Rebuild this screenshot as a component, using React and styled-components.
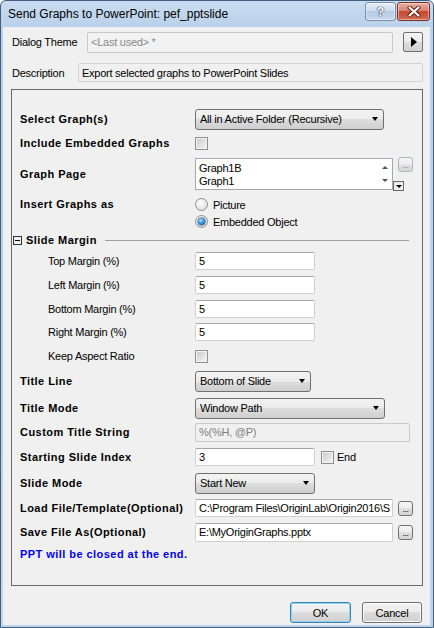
import styled, { createGlobalStyle } from 'styled-components';

const GlobalStyle = createGlobalStyle`
  html, body {
    margin: 0;
    padding: 0;
    background: #ffffff;
  }
  body {
    font-family: "Liberation Sans", Arial, sans-serif;
    font-size: 11px;
    color: #000;
  }
  * {
    box-sizing: border-box;
  }
`

const Window = styled.div`
  width: 434px;
  height: 628px;
  display: flex;
  flex-direction: column;
  border: 1px solid #3f5e80;
  border-radius: 6px 6px 0 0;
  background: linear-gradient(#cadcf1, #b9d1ea 26px, #bdd4ec);
  padding: 0 3px 2px 2px;
`

const TitleBar = styled.div`
  height: 26px;
  display: flex;
  align-items: flex-start;
  flex-shrink: 0;
`

const Caption = styled.div`
  margin-left: 5px;
  line-height: 26px;
  font-size: 12px;
  color: #000;
`

const CaptionButtons = styled.div`
  margin-left: auto;
  margin-top: 1px;
  display: flex;
  gap: 1px;
`

const CaptionButton = styled.div`
  width: ${p => p.$w}px;
  height: 19px;
  border-radius: 3px;
  display: flex;
  align-items: center;
  justify-content: center;
  border: 1px solid ${p => (p.$danger ? '#7a2c1f' : '#7a8ea8')};
  background: ${p =>
    p.$danger
      ? 'linear-gradient(#eab0a2, #d8826f 45%, #c44a34 50%, #cf6a50)'
      : 'linear-gradient(#e6eef8, #cddcee 45%, #b4c9e2 50%, #c7d8ee)'};
  box-shadow: inset 0 0 0 1px rgba(255, 255, 255, 0.45);
  color: #fff;
  font-weight: bold;
  font-size: 13px;
  text-shadow: 0 0 1px #2b3c55, 0 0 1px #2b3c55, 0 0 1px #2b3c55;
`

const Client = styled.div`
  flex: 1;
  background: #f0f0f0;
  display: flex;
  flex-direction: column;
  padding: 4px 0 0 8px;
`

const HeaderRow = styled.div`
  display: flex;
  align-items: center;
  height: ${p => p.$h}px;
  margin-top: ${p => p.$mt || 0}px;
  padding-left: 1px;
`

const HeaderLabel = styled.span`
  width: ${p => p.$w}px;
  flex-shrink: 0;
  letter-spacing: -0.25px;
`

const ReadOnlyBox = styled.div`
  width: ${p => p.$w}px;
  height: ${p => p.$h}px;
  display: flex;
  align-items: center;
  padding-left: 3px;
  border: 1px solid ${p => p.$border || '#cfcfcf'};
  border-radius: 2px;
  background: ${p => p.$bg || '#f0f0f0'};
  color: ${p => p.$color || '#000'};
  letter-spacing: -0.25px;
  white-space: nowrap;
  overflow: hidden;
`

const ArrowButton = styled.div`
  width: 20px;
  height: 20px;
  margin-left: 10px;
  border: 1px solid #707070;
  border-radius: 2px;
  background: linear-gradient(#f4f4f4, #ebebeb 50%, #dddddd 50%, #d0d0d0);
  display: flex;
  align-items: center;
  justify-content: center;

  &::after {
    content: '';
    border-top: 5.5px solid transparent;
    border-bottom: 5.5px solid transparent;
    border-left: 6px solid #000;
    margin-left: 1px;
  }
`

const GroupBox = styled.div`
  margin-top: 7px;
  width: 412px;
  height: 497px;
  border: 1px solid #696969;
  padding: 17px 8px 0 8px;
  display: flex;
  flex-direction: column;
`

const Row = styled.div`
  display: flex;
  align-items: ${p => p.$align || 'center'};
  height: ${p => p.$h}px;
  flex-shrink: 0;
`

const Label = styled.span`
  width: ${p => 175 - (p.$indent || 0)}px;
  margin-left: ${p => p.$indent || 0}px;
  flex-shrink: 0;
  font-weight: ${p => (p.$bold ? 'bold' : 'normal')};
  letter-spacing: ${p => (p.$bold ? '0.45px' : '-0.25px')};
  line-height: ${p => p.$lh || 'normal'};
  margin-top: ${p => p.$mt || 0}px;
  white-space: nowrap;
`

const Combo = styled.div`
  width: ${p => p.$w}px;
  height: 21px;
  border: 1px solid #707070;
  border-radius: 3px;
  background: linear-gradient(#f3f3f3, #ebebeb 50%, #dddddd 50%, #cfcfcf);
  display: flex;
  align-items: center;
  padding-left: 4px;
  letter-spacing: -0.25px;
  white-space: nowrap;

  &::after {
    content: '';
    margin-left: auto;
    margin-right: 5px;
    border-left: 3.5px solid transparent;
    border-right: 3.5px solid transparent;
    border-top: 4px solid #000;
  }
`

const Field = styled.div`
  width: ${p => p.$w}px;
  height: ${p => p.$h || 18}px;
  border: 1px solid #d0d0d0;
  border-top-color: #a6a6a6;
  border-radius: 2px;
  background: #fff;
  display: flex;
  align-items: center;
  padding-left: 3px;
  letter-spacing: -0.25px;
  white-space: nowrap;
  overflow: hidden;
`

const Checkbox = styled.span`
  width: 13px;
  height: 13px;
  flex-shrink: 0;
  border: 1px solid #8e8f8f;
  background: linear-gradient(135deg, #c9c9c9, #f6f6f6);
  box-shadow: inset 0 0 0 1px #f4f4f4;
`

const CheckLabel = styled.label`
  display: flex;
  align-items: center;
  gap: 3px;
  margin-left: 6px;
  letter-spacing: -0.25px;
`

const RadioGroup = styled.div`
  display: flex;
  flex-direction: column;
  padding-top: 3px;
`

const RadioOption = styled.label`
  display: flex;
  align-items: center;
  height: 17px;
  gap: 5px;
  letter-spacing: -0.25px;
`

const Radio = styled.span`
  width: 13px;
  height: 13px;
  border-radius: 50%;
  border: 1px solid #8e8f8f;
  background: radial-gradient(circle at 40% 35%, #ffffff, #e6e6e6 60%, #cfcfcf);
  display: flex;
  align-items: center;
  justify-content: center;

  &::after {
    content: '';
    display: ${p => (p.$checked ? 'block' : 'none')};
    width: 7px;
    height: 7px;
    border-radius: 50%;
    background: radial-gradient(circle at 40% 35%, #a6e0ff, #2a86d0 55%, #0c3c6e);
    box-shadow: 0 0 0 0.5px #1a3a5c;
  }
`

const ListBox = styled.div`
  width: 198px;
  height: 32px;
  border: 1px solid #a5a9ae;
  background: #fff;
  display: flex;
  padding: 3px 0 0 3px;
  line-height: 13px;
`

const ListItems = styled.div`
  flex: 1;
  letter-spacing: -0.25px;
`

const SpinArrows = styled.div`
  width: 14px;
  display: flex;
  flex-direction: column;
  align-items: center;
  gap: 10px;
  padding-top: 4px;
`

const SpinArrow = styled.span`
  border-left: 3px solid transparent;
  border-right: 3px solid transparent;
  ${p =>
    p.$down
      ? 'border-top: 3px solid #555;'
      : 'border-bottom: 3px solid #555;'}
`

const ListSide = styled.div`
  width: 20px;
  height: 34px;
  display: flex;
  flex-direction: column;
  justify-content: space-between;
`

const DotsButton = styled.div`
  width: 15px;
  height: 15px;
  margin-left: ${p => p.$ml || 0}px;
  border: 1px solid ${p => (p.$faded ? '#b0b6bb' : '#707070')};
  border-radius: 3px;
  background: linear-gradient(#f6f6f6, #ececec 50%, #dfdfdf 50%, #d6d6d6);
  color: ${p => (p.$faded ? '#8a8a8a' : '#000')};
  font-size: 9px;
  line-height: 15px;
  text-align: center;
  letter-spacing: -0.5px;
  flex-shrink: 0;
`

const MiniDrop = styled.div`
  width: 11px;
  height: 10px;
  border: 1px solid #6a6a6a;
  background: #ececec;
  display: flex;
  align-items: center;
  justify-content: center;

  &::after {
    content: '';
    border-left: 3px solid transparent;
    border-right: 3px solid transparent;
    border-top: 3px solid #000;
  }
`

const SectionHeader = styled.div`
  display: flex;
  align-items: center;
  height: 18px;
  margin-left: -7px;
  flex-shrink: 0;
`

const CollapseBox = styled.span`
  width: 9px;
  height: 9px;
  border: 1px solid #333;
  display: flex;
  align-items: center;
  justify-content: center;

  &::after {
    content: '';
    width: 5px;
    height: 1px;
    background: #000;
  }
`

const SectionTitle = styled.span`
  margin-left: 4px;
  font-weight: bold;
  letter-spacing: 0.45px;
`

const Rule = styled.span`
  flex: 1;
  height: 1px;
  margin: 0 5px 0 8px;
  background: #a0a0a0;
`

const Note = styled.div`
  height: 24px;
  display: flex;
  align-items: center;
  color: #0000ff;
  font-weight: bold;
  letter-spacing: 0.45px;
`

const Footer = styled.div`
  display: flex;
  justify-content: flex-end;
  gap: 11px;
  margin-top: 16px;
  padding-right: 8px;
`

const Button = styled.div`
  width: ${p => p.$w}px;
  height: 21px;
  border: 1px solid ${p => (p.$default ? '#3c7fb1' : '#707070')};
  border-radius: 3px;
  background: linear-gradient(#f3f3f3, #ebebeb 50%, #dddddd 50%, #cfcfcf);
  box-shadow: ${p => (p.$default ? 'inset 0 0 0 1px #8fd4f5' : 'inset 0 0 0 1px #fbfbfb')};
  display: flex;
  align-items: center;
  justify-content: center;
  letter-spacing: -0.2px;
`

const marginRows = [
  { label: 'Top Margin (%)', h: 24 },
  { label: 'Left Margin (%)', h: 24 },
  { label: 'Bottom Margin (%)', h: 23 },
  { label: 'Right Margin (%)', h: 24 },
]

function CloseGlyph() {
  return (
    <svg width="14" height="11" viewBox="0 0 14 11">
      <path d="M2.5 1.5 L11.5 9.5 M11.5 1.5 L2.5 9.5" stroke="#5a1a10" strokeWidth="4" strokeLinecap="round" />
      <path d="M2.5 1.5 L11.5 9.5 M11.5 1.5 L2.5 9.5" stroke="#ffffff" strokeWidth="2.2" strokeLinecap="round" />
    </svg>
  )
}

function App() {
  return (
    <>
      <GlobalStyle />
      <Window>
        <TitleBar>
          <Caption>Send Graphs to PowerPoint: pef_pptslide</Caption>
          <CaptionButtons>
            <CaptionButton $w={31}>?</CaptionButton>
            <CaptionButton $w={33} $danger>
              <CloseGlyph />
            </CaptionButton>
          </CaptionButtons>
        </TitleBar>

        <Client>
          <HeaderRow $h={22}>
            <HeaderLabel $w={75}>Dialog Theme</HeaderLabel>
            <ReadOnlyBox $w={306} $h={21} $bg="#f2f2f2" $border="#c9c9c9" $color="#8a8a8a">
              &lt;Last used&gt; *
            </ReadOnlyBox>
            <ArrowButton />
          </HeaderRow>
          <HeaderRow $h={19} $mt={10}>
            <HeaderLabel $w={66}>Description</HeaderLabel>
            <ReadOnlyBox $w={345} $h={19} $border="#d3d3d3">
              Export selected graphs to PowerPoint Slides
            </ReadOnlyBox>
          </HeaderRow>

          <GroupBox>
            <Row $h={24}>
              <Label $bold>Select Graph(s)</Label>
              <Combo $w={189}>All in Active Folder (Recursive)</Combo>
            </Row>
            <Row $h={24}>
              <Label $bold>Include Embedded Graphs</Label>
              <Checkbox />
            </Row>
            <Row $h={38}>
              <Label $bold>Graph Page</Label>
              <ListBox>
                <ListItems>
                  <div>Graph1B</div>
                  <div>Graph1</div>
                </ListItems>
                <SpinArrows>
                  <SpinArrow />
                  <SpinArrow $down />
                </SpinArrows>
              </ListBox>
              <ListSide>
                <DotsButton $ml={5} $faded>...</DotsButton>
                <MiniDrop />
              </ListSide>
            </Row>
            <Row $h={38} $align="flex-start">
              <Label $bold $lh="17px" $mt={3}>Insert Graphs as</Label>
              <RadioGroup>
                <RadioOption>
                  <Radio />
                  Picture
                </RadioOption>
                <RadioOption>
                  <Radio $checked />
                  Embedded Object
                </RadioOption>
              </RadioGroup>
            </Row>

            <SectionHeader>
              <CollapseBox />
              <SectionTitle>Slide Margin</SectionTitle>
              <Rule />
            </SectionHeader>
            {marginRows.map(m => (
              <Row key={m.label} $h={m.h}>
                <Label $indent={28}>{m.label}</Label>
                <Field $w={120}>5</Field>
              </Row>
            ))}
            <Row $h={24}>
              <Label $indent={28}>Keep Aspect Ratio</Label>
              <Checkbox />
            </Row>

            <Row $h={26}>
              <Label $bold>Title Line</Label>
              <Combo $w={116}>Bottom of Slide</Combo>
            </Row>
            <Row $h={28}>
              <Label $bold>Title Mode</Label>
              <Combo $w={190}>Window Path</Combo>
            </Row>
            <Row $h={20}>
              <Label $bold>Custom Title String</Label>
              <ReadOnlyBox $w={215} $h={19} $border="#c9c9c9" $color="#808080">
                %(%H, @P)
              </ReadOnlyBox>
            </Row>
            <Row $h={30}>
              <Label $bold>Starting Slide Index</Label>
              <Field $w={120}>3</Field>
              <CheckLabel>
                <Checkbox />
                End
              </CheckLabel>
            </Row>
            <Row $h={22}>
              <Label $bold>Slide Mode</Label>
              <Combo $w={120}>Start New</Combo>
            </Row>
            <Row $h={28}>
              <Label $bold>Load File/Template(Optional)</Label>
              <Field $w={198}>C:\Program Files\OriginLab\Origin2016\S</Field>
              <DotsButton $ml={5}>...</DotsButton>
            </Row>
            <Row $h={20}>
              <Label $bold>Save File As(Optional)</Label>
              <Field $w={198} $h={19}>E:\MyOriginGraphs.pptx</Field>
              <DotsButton $ml={5}>...</DotsButton>
            </Row>
            <Note>PPT will be closed at the end.</Note>
          </GroupBox>

          <Footer>
            <Button $w={61} $default>OK</Button>
            <Button $w={60}>Cancel</Button>
          </Footer>
        </Client>
      </Window>
    </>
  )
}

export default App
